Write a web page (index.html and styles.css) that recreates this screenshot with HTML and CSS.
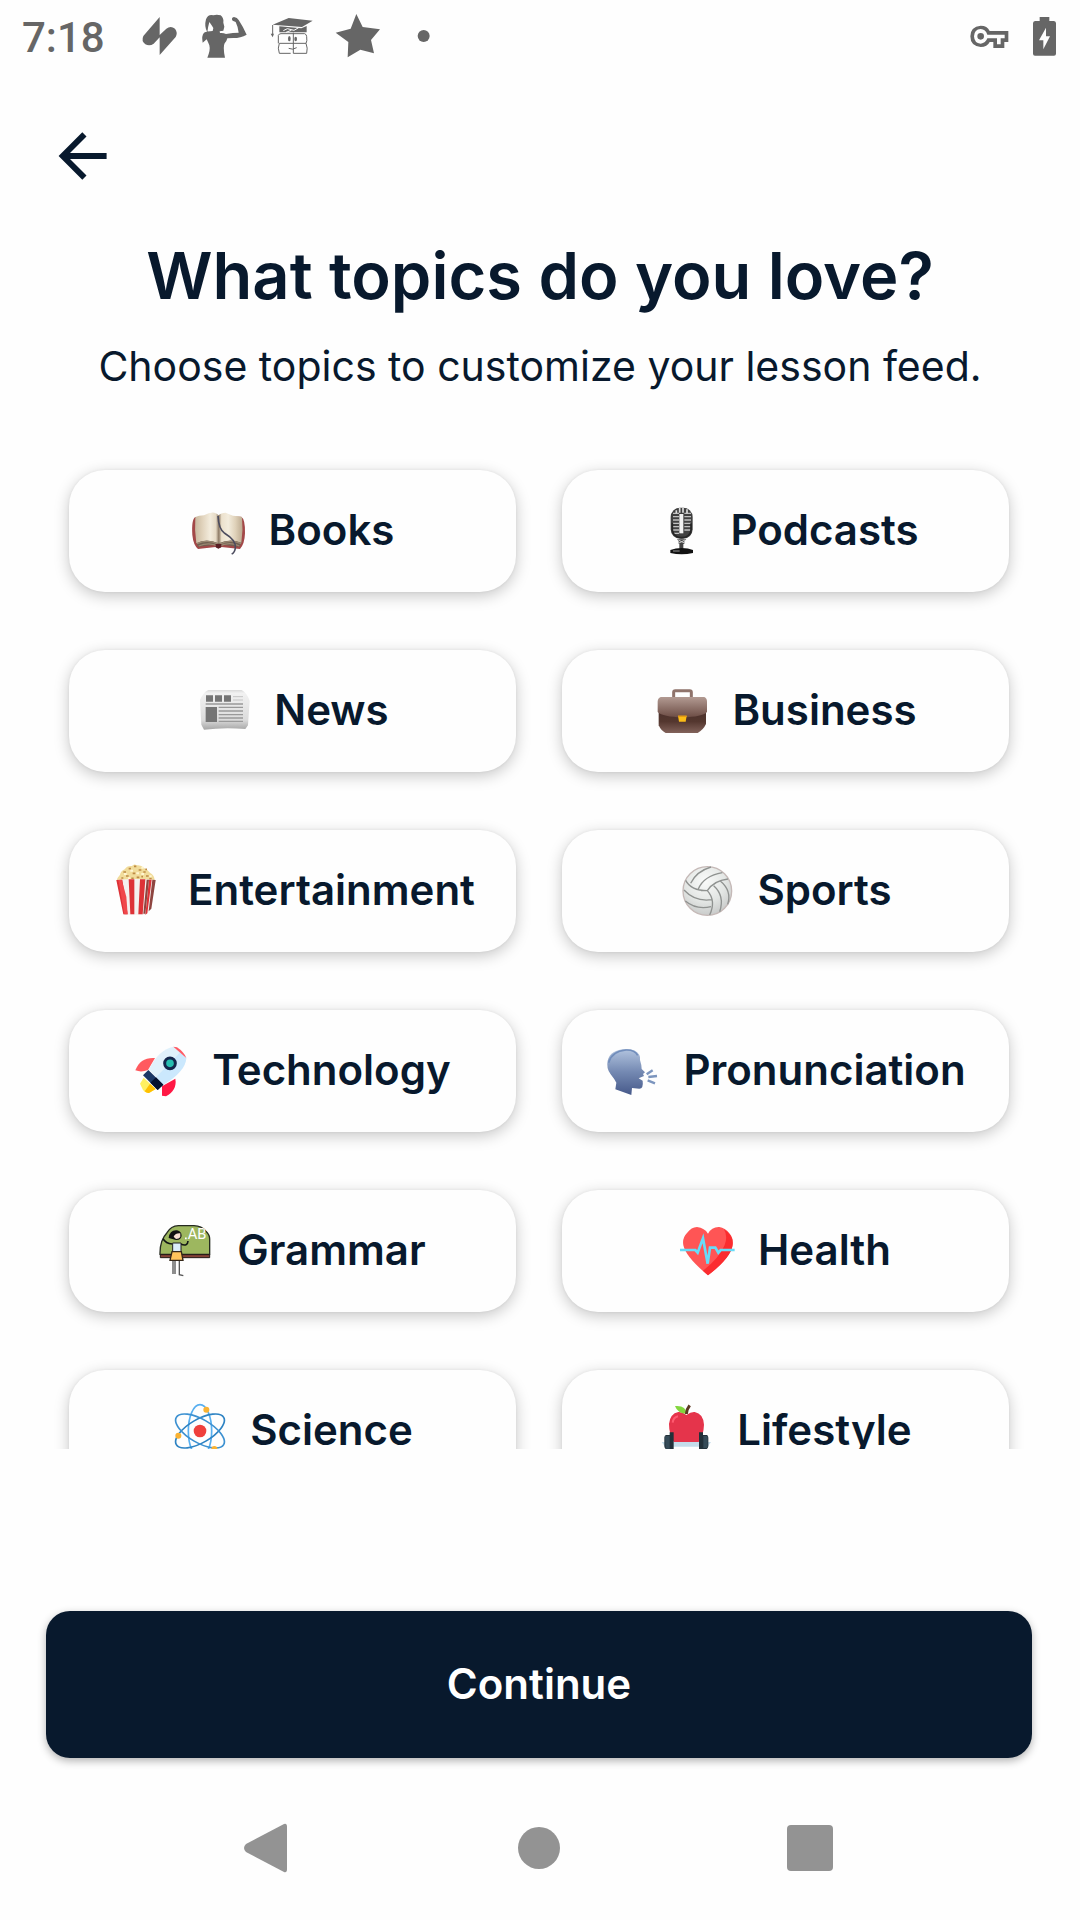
FILE: index.html
```html
<!DOCTYPE html>
<html lang="en">
<head>
<meta charset="utf-8">
<meta name="viewport" content="width=device-width, initial-scale=1">
<title>What topics do you love?</title>
<link rel="stylesheet" href="styles.css">
</head>
<body>
<div class="screen">
  <header class="status">
    <span class="status-time">7:18</span>
    <div class="status-icons">
      <svg class="status-icon" viewBox="378 0 198 216" aria-hidden="true"><path d="M479 51V112L461 131Q449 140 436 133Q423 123 430 108ZM479 165V105L499 86Q512 76 525 86Q534 97 527 111Z"/></svg>
      <svg class="status-icon" viewBox="576 0 198 216" aria-hidden="true"><path d="M622 97Q612 80 618 58Q624 42 640 46Q650 42 662 46Q672 54 670 68L673 80L670 92L659 94L660 99Q670 98 678 102Q700 98 716 98Q714 80 707 66L698 62Q692 54 702 51Q712 52 716 60Q728 78 740 104Q722 114 700 114L682 115Q680 124 674 130Q668 140 675 173H622Q632 150 628 136Q624 126 620 118L608 128Q604 106 612 98Q620 93 638 93L640 84Q634 74 628 66Q624 80 622 97Z"/></svg>
      <svg class="status-icon" viewBox="774 0 198 216" aria-hidden="true"><path d="M818 74L866 54L938 62L906 81ZM838 79L904 85L920 78V97H838Z"/><path class="thin-line" d="M818 75V102M835 130V106Q837 101 843 101H914Q920 103 920 110Q922 124 918 130H838Q832 144 838 160H872M918 130Q924 144 920 160H880M880 98V160M866 145Q878 151 890 143"/><path class="cut" d="M850 92L862 86L882 91L896 83M858 97L874 91"/><path d="M812 101H822L818 112Z"/><ellipse cx="868" cy="116" rx="4" ry="8"/><ellipse cx="887" cy="117" rx="4" ry="7"/></svg>
      <svg class="status-icon" viewBox="972 0 198 216" aria-hidden="true"><path d="M1069 42L1088 81L1140 88L1113 120L1122 160L1081 149L1043 172L1045 126L1007 98L1052 86Z"/></svg>
      <svg class="status-icon" viewBox="1170 0 198 216" aria-hidden="true"><circle cx="1271" cy="108" r="18"/></svg>
    </div>
    <div class="status-right">
      <svg class="status-key" viewBox="87 48 123 120" aria-hidden="true"><path fill-rule="evenodd" d="M122 77Q142 77 149 93H205V126H193V144H160V126H149Q142 141 122 141Q91 138 91 109Q91 80 122 77ZM122 87Q103 88 102 109Q103 130 122 131Q137 130 142 115H171V133H182V115H194V104H142Q137 88 122 87ZM122 99A10 10 0 1 1 122 119A10 10 0 1 1 122 99Z"/></svg>
      <svg class="status-battery" viewBox="276 45 75 123" aria-hidden="true"><path fill-rule="evenodd" d="M299 48H328V60H342Q348 61 348 67V158Q348 164 342 164H285Q279 164 279 158V67Q279 61 285 60H299ZM318 80L297 118H310V145L330 106H318Z"/></svg>
    </div>
  </header>

  <div class="toolbar">
    <button class="back" type="button" aria-label="Back"><svg class="back-icon" viewBox="0 0 24 24" aria-hidden="true"><path d="M20.200 11H8l5.500-5.500L12.100 4.100 4.200 12l7.900 7.900 1.400-1.400L8 13h12.200z"/></svg></button>
  </div>

  <main class="content">
    <h1 class="title">What topics do you love?</h1>
    <p class="subtitle">Choose topics to customize your lesson feed.</p>

    <div class="topics">
      <button class="topic" type="button">
        <svg class="topic-icon" viewBox="423 159 168 168" aria-hidden="true">
          <defs><linearGradient id="page"><stop offset="0" stop-color="#c9b99f"/><stop offset=".15" stop-color="#e0d2bb"/><stop offset=".32" stop-color="#f3ecdd"/><stop offset=".44" stop-color="#e6dac5"/><stop offset=".5" stop-color="#8d7a65"/><stop offset=".56" stop-color="#ece1cd"/><stop offset=".7" stop-color="#f3ecdd"/><stop offset=".85" stop-color="#dfd1b9"/><stop offset="1" stop-color="#bcaa90"/></linearGradient></defs>
          <path d="M436 201Q424 208 427 255Q430 285 444 297L497 291Q505 298 514 291L570 297Q584 282 585 250Q586 208 574 200Z" fill="#a34848"/>
          <path d="M438 274L444 290L498 284L514 284L568 290L576 274L506 262Z" fill="#6f5f50"/>
          <path d="M436 201Q446 197 462 196Q480 186 493 188Q501 190 506 196Q513 188 527 188Q537 192 549 197Q568 197 576 202Q580 240 574 278Q540 264 506 280Q468 263 439 280Q433 240 436 201Z" fill="url(#page)"/>
          <path d="M441 281Q476 266 506 284Q540 266 573 281M446 288Q480 274 506 290Q536 273 568 288" fill="none" stroke="#9b8872" stroke-width="4"/>
          <path d="M497 282H514V292L505 296L497 292Z" fill="#5a1f25"/>
          <path d="M504 198Q506 238 524 250Q560 272 556 295Q553 309 545 312" fill="none" stroke="#4c4c5e" stroke-width="5"/>
        </svg>
        <span class="topic-label">Books</span>
      </button>
      <button class="topic" type="button">
        <svg class="topic-icon" viewBox="303 159 168 168" aria-hidden="true">
          <rect x="359" y="173" width="66" height="93" rx="28" fill="#404040"/>
          <path d="M366 190H384M366 200H384M366 210H384M366 220H384M366 230H384M366 240H384M368 250H384M400 190H420M400 200H420M400 210H420M400 220H420M400 230H420M400 240H420" stroke="#bfbfbf" stroke-width="4"/>
          <path d="M385 192V250H397V192" fill="#f2f2f2"/>
          <path d="M376 181V190M386 174V188M396 174V188M408 178V190" stroke="#ddd" stroke-width="5"/>
          <path d="M364 220V241Q368 262 392 263Q417 262 420 240V220" fill="none" stroke="#252525" stroke-width="5"/>
          <path d="M378 268H406L400 273V282H397V296H385V282H383V273Z" fill="#444"/>
          <path d="M382 270L402 280M402 270L382 280" stroke="#ccc" stroke-width="3"/>
          <path d="M358 300Q374 294 392 294Q412 294 426 300V309Q392 317 358 309Z" fill="#111"/><path d="M366 303H386" stroke="#999" stroke-width="3"/>
        </svg>
        <span class="topic-label">Podcasts</span>
      </button>
      <button class="topic" type="button">
        <svg class="topic-icon" viewBox="444 699 168 168" aria-hidden="true">
          <defs><linearGradient id="paper" x2="0" y2="1"><stop offset="0" stop-color="#d9d9d9"/><stop offset=".08" stop-color="#f2f2f2"/><stop offset=".75" stop-color="#dcdcdc"/><stop offset="1" stop-color="#a6a6a6"/></linearGradient></defs>
          <path d="M481 720H581Q596 728 605 752L600 826L592 837Q530 831 468 839L460 824L456 750Q465 728 481 720Z" fill="url(#paper)"/>
          <path d="M474 736H495V755H474ZM501 736H522V755H501ZM528 736H549V755H528ZM473 771H507V816H473Z" fill="#757575"/>
          <path d="M473 762H585M512 772H585M512 783H585M512 794H585M512 804H585M512 814H585" stroke="#999" stroke-width="4"/>
          <path d="M555 740H585M555 750H585" stroke="#c4c4c4" stroke-width="3"/>
        </svg>
        <span class="topic-label">News</span>
      </button>
      <button class="topic" type="button">
        <svg class="topic-icon" viewBox="315 699 168 168" aria-hidden="true">
          <defs><linearGradient id="flap" x2="0" y2="1"><stop offset="0" stop-color="#b29a92"/><stop offset="1" stop-color="#6d4d45"/></linearGradient><linearGradient id="case" x2="0" y2="1"><stop offset="0" stop-color="#4a302b"/><stop offset=".5" stop-color="#54372f"/><stop offset="1" stop-color="#82625a"/></linearGradient></defs>
          <path d="M374 744V727Q374 722 379 722H422Q427 722 427 727V744" fill="none" stroke="#8f736b" stroke-width="9"/>
          <path d="M329 780H471V822Q464 838 446 849H350Q336 842 329 826Z" fill="url(#case)"/>
          <path d="M335 741H466Q474 744 474 755V786Q460 801 400 802Q342 801 326 786V755Q326 744 335 741Z" fill="url(#flap)"/>
          <path d="M387 797H413L410 815H390Z" fill="#fbbd18"/><path d="M387 797H413V801H387Z" fill="#e59a12"/>
        </svg>
        <span class="topic-label">Business</span>
      </button>
      <button class="topic" type="button">
        <svg class="topic-icon" viewBox="168 159 168 168" aria-hidden="true">
          <path d="M188 212Q190 202 198 194Q200 184 212 178Q219 166 234 168Q240 160 248 166Q262 164 270 174Q282 180 288 188Q302 196 302 212Z" fill="#f1dc9b"/>
          <path d="M208 186h8M224 176h7M240 169h7M254 180h8M268 186h7M216 198h8M236 190h8M248 202h8M276 198h8M262 200h5M232 205h7M202 204h6M286 206h7M274 178h5" stroke="#bd8a45" stroke-width="5"/>
          <path d="M210 192h8M229 182h8M247 190h8M262 192h8M222 205h7M286 199h7M262 173h7" stroke="#fff6d2" stroke-width="6"/>
          <path d="M187 210Q246 204 305 210L292 296L276 314H208Z" fill="#f4f1ef"/>
          <path d="M187 210L205 209L221 313H208ZM224 208L241 208L241 313H229ZM258 208H274L266 313H253ZM285 209L293 209L280 310L274 314Z" fill="#dd3237"/>
          <path d="M193 210L203 209L217 260L221 313H211Z" fill="#f0474b"/>
          <path d="M295 209L305 210L292 296L284 304ZM278 209L285 209L274 311H268Z" fill="#8e4540"/>
        </svg>
        <span class="topic-label">Entertainment</span>
      </button>
      <button class="topic" type="button">
        <svg class="topic-icon" viewBox="384 159 168 168" aria-hidden="true">
          <defs><radialGradient id="ball" cx=".45" cy=".3" r=".7"><stop offset="0" stop-color="#fafbfa"/><stop offset=".6" stop-color="#e3e6e4"/><stop offset="1" stop-color="#c9cbca"/></radialGradient></defs>
          <circle cx="469" cy="243" r="73" fill="url(#ball)" stroke="#c5b9b7" stroke-width="4"/>
          <path d="M404 211Q420 242 469 242Q488 212 531 207M469 242Q496 272 476 315M419 220Q436 184 480 171M442 237Q458 198 514 188M399 240Q432 276 482 269M403 273Q435 300 480 290M488 227Q522 257 506 305M508 213Q543 242 530 283M469 242L450 242" fill="none" stroke="#8f9290" stroke-width="4"/>
        </svg>
        <span class="topic-label">Sports</span>
      </button>
      <button class="topic" type="button">
        <svg class="topic-icon" viewBox="258 699 168 168" aria-hidden="true">
          <path d="M262 781Q277 741 321 744L300 780Q280 788 262 781Z" fill="#ff5a5f"/>
          <path d="M342 829L382 806Q388 840 354 859L342 857Z" fill="#ff1844"/>
          <path d="M287 803L323 837L303 849Q293 851 285 840L276 821Z" fill="#fff060"/><path d="M306 821L323 837L303 849Q296 850 290 844Z" fill="#ffc000"/>
          <path d="M376 710Q394 723 415 744Q412 785 346 824L303 778Q333 718 376 710Z" fill="#e0f1fb"/>
          <path d="M397 727L415 744Q412 785 346 824L325 801Z" fill="#cbe8fd"/>
          <path d="M376 710L387 712Q408 726 415 744Z" fill="#ff5a64"/>
          <path d="M301 780L346 824L329 840L285 796Z" fill="#1c3866"/><path d="M324 802L346 824L329 840L307 818Z" fill="#04102f"/>
          <circle cx="366" cy="760" r="16" fill="#26bdb0" stroke="#13264c" stroke-width="9"/>
        </svg>
        <span class="topic-label">Technology</span>
      </button>
      <button class="topic" type="button">
        <svg class="topic-icon" viewBox="159 699 168 168" aria-hidden="true">
          <defs><linearGradient id="head" x2="0" y2="1"><stop offset="0" stop-color="#b2c4df"/><stop offset=".5" stop-color="#7489b2"/><stop offset="1" stop-color="#46598a"/></linearGradient></defs>
          <path d="M190 838L193 818Q188 808 176 793Q162 774 167 752Q175 719 222 717Q252 716 262 735Q265 740 264 750Q269 765 269 777L279 787L273 792L276 798L260 805L272 812Q275 835 262 836L240 834L238 855Z" fill="url(#head)"/>
          <path d="M170 758Q179 724 222 720Q248 719 257 736" fill="none" stroke="#718dbb" stroke-width="5"/>
          <path d="M284 793L302 781M289 801L315 798M287 811L309 820" fill="none" stroke="#7c95be" stroke-width="7"/>
        </svg>
        <span class="topic-label">Pronunciation</span>
      </button>
      <button class="topic" type="button">
        <svg class="topic-icon" viewBox="324 159 168 168" aria-hidden="true">
          <path d="M327 253Q326 211 348 188Q360 168 382 167H429Q452 168 464 183Q476 194 476 207V253Z" fill="#9db75f" stroke="#252a20" stroke-width="4"/>
          <path d="M328 254H476V263H328Z" fill="#854236" stroke="#241b18" stroke-width="3"/>
          <text class="board-text" x="410" y="206">AB</text><path d="M402 205h5" stroke="#fff" stroke-width="5"/>
          <path d="M366 270V312M372 270V312M385 270V314L397 317" fill="none" stroke="#555" stroke-width="4"/>
          <path d="M336 206Q344 221 364 222M389 222Q410 231 411 213" fill="none" stroke="#121715" stroke-width="5"/>
          <path d="M365 219H390V246H365Z" fill="#dceefa" stroke="#222" stroke-width="3"/>
          <path d="M363 245H391L396 271H357Z" fill="#ffc45c" stroke="#342719" stroke-width="4"/>
          <path d="M353 204Q356 179 378 181Q392 184 392 198Q389 211 375 210Z" fill="#111"/><path d="M368 200Q373 189 388 190V201Q384 207 375 207Z" fill="#f8dfd2"/>
        </svg>
        <span class="topic-label">Grammar</span>
      </button>
      <button class="topic" type="button">
        <svg class="topic-icon" viewBox="387 159 168 168" aria-hidden="true">
          <path d="M471 191Q482 170 505 171Q522 173 535 190Q549 205 544 228Q538 264 471 316Q405 262 397 226Q393 204 408 189Q421 171 438 171Q461 174 471 191Z" fill="#ff5555"/>
          <path d="M519 178Q551 198 544 230Q536 266 471 316L456 302Q506 263 521 225Q531 199 519 178Z" fill="#fb2c2f"/>
          <path d="M387 240H433L440 248L456 205L470 281L477 233H493L502 248L509 240H551" fill="none" stroke="#67dcf8" stroke-width="8"/>
        </svg>
        <span class="topic-label">Health</span>
      </button>
      <button class="topic" type="button">
        <svg class="topic-icon" viewBox="369 699 168 168" aria-hidden="true">
          <g fill="none" stroke-width="5"><ellipse cx="453" cy="783" rx="35" ry="79" stroke="#58aff0"/><ellipse cx="453" cy="783" rx="35" ry="82" transform="rotate(60 453 783)" stroke="#2e83c3"/><ellipse cx="453" cy="783" rx="35" ry="82" transform="rotate(-60 453 783)" stroke="#3d91d1"/></g>
          <circle cx="453" cy="783" r="19" fill="#ef403c"/>
          <g fill="#f9b233"><circle cx="472" cy="719" r="9"/><circle cx="388" cy="797" r="9"/><circle cx="496" cy="837" r="9"/></g>
        </svg>
        <span class="topic-label">Science</span>
      </button>
      <button class="topic" type="button">
        <svg class="topic-icon" viewBox="324 699 168 168" aria-hidden="true">
          <path d="M332 816H480L470 830H342Z" fill="#c4dcea"/>
          <path d="M406 735Q420 725 431 726Q457 731 459 764Q458 795 443 816H368Q354 790 354 762Q357 731 382 726Q395 725 406 735Z" fill="#e5344b"/>
          <path d="M365 758Q367 742 381 739" fill="none" stroke="#ff5a70" stroke-width="6"/>
          <path d="M372 708Q405 705 407 731Q380 731 372 708Z" fill="#83d63e"/>
          <path d="M406 732Q406 719 416 706" fill="none" stroke="#5c3922" stroke-width="9"/>
          <path d="M345 795H356V787H368V850H356V837H345Q340 836 340 826V802Q341 796 345 795ZM444 787H456V795H468Q472 797 472 803V829Q471 836 467 837H456V850H444Z" fill="#223039"/>
          <path d="M342 798H356V836H344ZM457 798H470V834H457Z" fill="#354b58"/>
        </svg>
        <span class="topic-label">Lifestyle</span>
      </button>
    </div>
  </main>

  <footer class="actions">
    <button class="continue" type="button">Continue</button>
  </footer>

  <nav class="navbar" aria-label="System navigation">
    <button class="nav-button" type="button" aria-label="Back"><svg class="nav-icon" viewBox="0 0 72 72" aria-hidden="true"><path d="M50 12Q53 11 53 15V57Q53 61 50 60L12 40Q8 36 12 32Z"/></svg></button>
    <button class="nav-button" type="button" aria-label="Home"><svg class="nav-icon" viewBox="0 0 72 72" aria-hidden="true"><circle cx="35" cy="36" r="21"/></svg></button>
    <button class="nav-button" type="button" aria-label="Recent apps"><svg class="nav-icon" viewBox="0 0 72 72" aria-hidden="true"><rect x="13" y="13" width="46" height="46" rx="4"/></svg></button>
  </nav>
</div>
</body>
</html>
```
FILE: styles.css
```css
* {
  box-sizing: border-box;
}

body {
  margin: 0;
  background: #fefefe;
  color: #08192d;
  font-family: Inter, Roboto, sans-serif;
}

button {
  margin: 0;
  padding: 0;
  border: 0;
  background: none;
  color: inherit;
  font: inherit;
  cursor: pointer;
}

svg {
  display: block;
}

.screen {
  display: flex;
  flex-direction: column;
  height: 100vh;
}

.status {
  display: flex;
  align-items: center;
  flex: none;
  height: 72px;
  padding: 0 23px 0 22px;
  color: #666;
  fill: #666;
}

.status-time {
  margin-right: 21px;
  padding-top: 3px;
  font-family: Roboto, sans-serif;
  font-size: 42px;
  font-weight: 500;
  line-height: 72px;
}

.status-icons,
.status-right {
  display: flex;
  align-items: center;
}

.status-icon {
  width: 66px;
  height: 72px;
}

.status-right {
  gap: 22px;
  margin-left: auto;
}

.status-key {
  width: 41px;
  height: 40px;
}

.status-battery {
  width: 25px;
  height: 41px;
}

.thin-line {
  fill: none;
  stroke: #666;
  stroke-width: 3;
}

.cut {
  fill: none;
  stroke: #fefefe;
  stroke-width: 3;
}

.toolbar {
  flex: none;
  padding: 48px 46px 44px;
}

.back,
.back-icon {
  display: block;
  width: 72px;
  height: 72px;
  fill: #08192d;
}

.content {
  display: flex;
  flex-direction: column;
  flex: 1;
  min-height: 0;
  text-align: center;
}

.title {
  margin: 0;
  font-size: 65px;
  font-weight: 600;
  line-height: 80px;
}

.subtitle {
  margin: 20px 0 24px;
  font-size: 41px;
  line-height: 60px;
}

.topics {
  display: grid;
  grid-template-columns: 1fr 1fr;
  grid-auto-rows: 122px;
  gap: 58px 46px;
  min-height: 0;
  padding: 50px 71px 0 69px;
  overflow-y: auto;
  scrollbar-width: none;
}

.topic {
  display: flex;
  align-items: center;
  justify-content: center;
  gap: 22px;
  border-radius: 36px;
  background: #fefefe;
  box-shadow: 0 0 3px rgba(0, 0, 0, .06), 0 4px 15px rgba(0, 0, 0, .22);
  font-size: 42px;
  font-weight: 600;
  line-height: 56px;
}

.topic-label {
  padding-bottom: 2px;
}

.topic-icon {
  flex: none;
  width: 56px;
  height: 56px;
}

.board-text {
  fill: #fff;
  font-family: Roboto, sans-serif;
  font-size: 44px;
  font-weight: 400;
}

.actions {
  flex: none;
  padding: 162px 48px 18px 46px;
}

.continue {
  display: block;
  width: 100%;
  height: 147px;
  padding-bottom: 3px;
  border-radius: 24px;
  background: #08192d;
  box-shadow: 0 3px 9px rgba(0, 0, 0, .3);
  color: #fff;
  font-size: 42px;
  font-weight: 600;
}

.navbar {
  display: flex;
  flex: none;
  justify-content: center;
  gap: 126px;
}

.nav-button {
  display: grid;
  place-items: center;
  width: 144px;
  height: 144px;
}

.nav-icon {
  width: 72px;
  height: 72px;
  fill: #939393;
}
```
